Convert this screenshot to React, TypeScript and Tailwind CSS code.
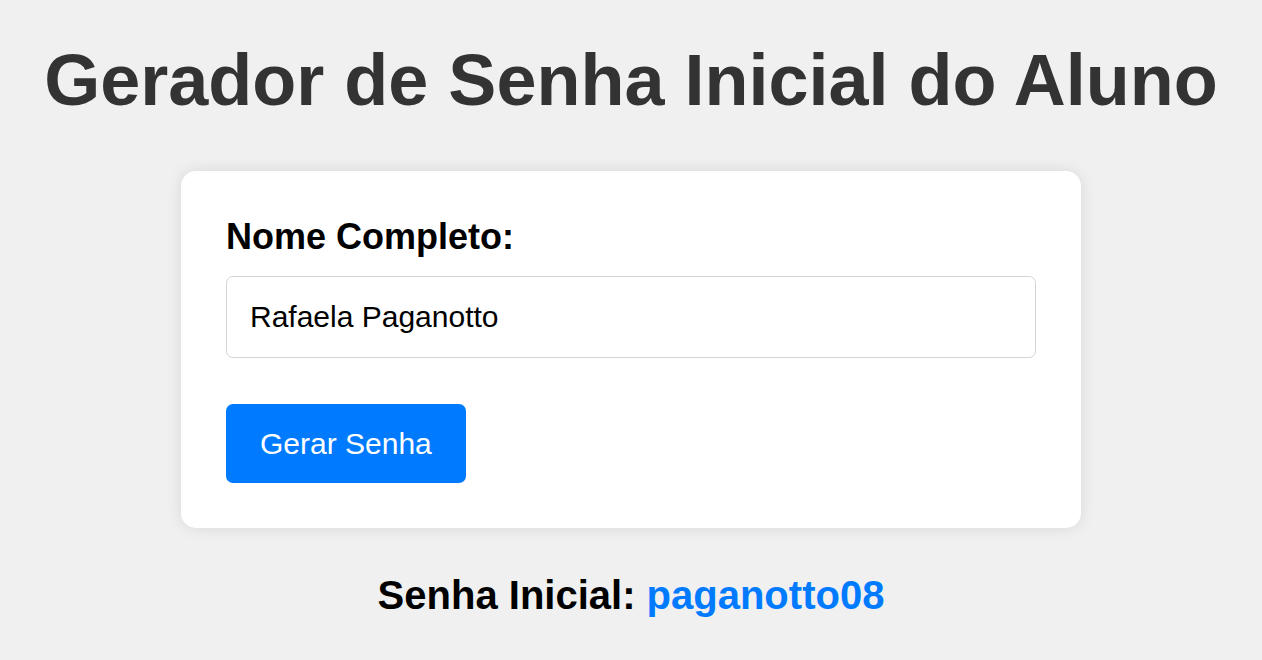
import React, { useState } from 'react';

const App: React.FC = () => {
  const [nome, setNome] = useState('Rafaela Paganotto');
  const [senha, setSenha] = useState('paganotto08');

  const gerarSenha = () => {
    const partes = nome.trim().split(/\s+/);
    const sobrenome = (partes[partes.length - 1] || '').toLowerCase();
    setSenha(sobrenome + '08');
  };

  return (
    <div className="min-h-screen bg-[#f0f0f0] font-['Liberation_Sans',Arial,sans-serif] flex flex-col items-center pt-[39px]">
      <h1 className="text-[72px] leading-[83px] font-bold text-[#333333] text-center">
        Gerador de Senha Inicial do Aluno
      </h1>

      <div className="mt-[49px] w-[900px] bg-white rounded-[15px] shadow-[0_0_15px_rgba(0,0,0,0.1)] p-[45px]">
        <label className="block text-[36px] leading-[41px] font-bold text-black mb-[19px]">
          Nome Completo:
        </label>
        <input
          type="text"
          value={nome}
          onChange={(e) => setNome(e.target.value)}
          className="block w-full h-[82px] px-[23px] text-[30px] text-black border border-[#d4d4d4] rounded-[7px] outline-none bg-white"
        />
        <button
          onClick={gerarSenha}
          className="mt-[46px] h-[79px] px-[34px] bg-[#007bff] text-white text-[30px] rounded-[7px]"
        >
          Gerar Senha
        </button>
      </div>

      <p className="mt-[44px] text-[40px] leading-[46px] font-bold text-black">
        Senha Inicial: <span className="text-[#007bff]">{senha}</span>
      </p>
    </div>
  );
};

export default App;
